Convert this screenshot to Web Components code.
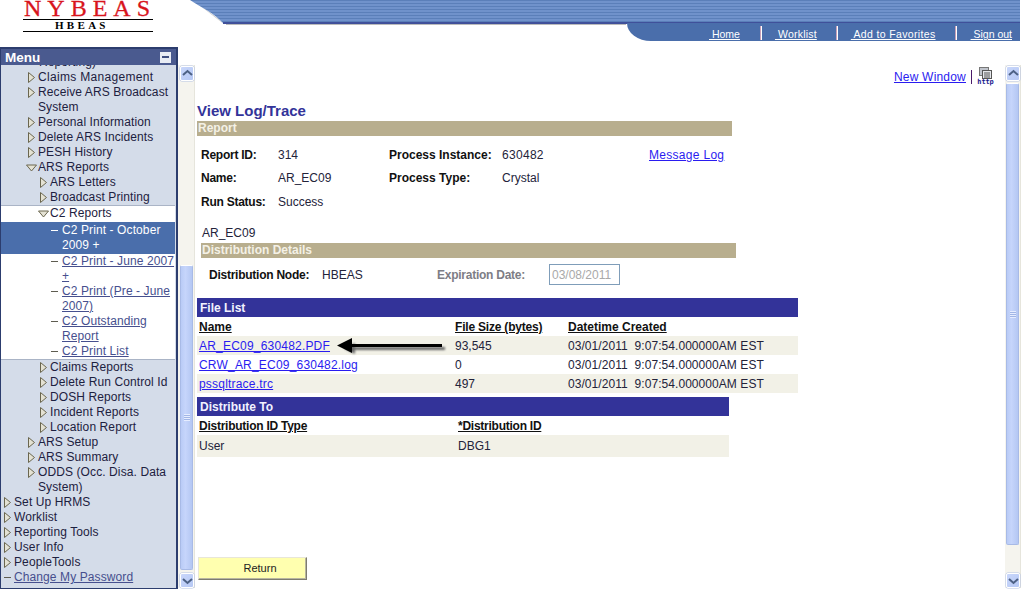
<!DOCTYPE html>
<html>
<head>
<meta charset="utf-8">
<title>View Log/Trace</title>
<style>
  html, body { margin: 0; height: 589px; overflow: hidden; background: #fff; }
  body { font: 12px "Liberation Sans", Arial, sans-serif; display: flex; flex-direction: column; }
  .work { display: flex; flex: 1; min-height: 0; }
</style>
</head>
<body>
<app-header></app-header>
<div class="work">
  <side-menu>
    <menu-item level="2" hang>Reporting)</menu-item>
    <menu-item level="2" icon="closed" style="letter-spacing:.32px">Claims Management</menu-item>
    <menu-item level="2" icon="closed">Receive ARS Broadcast<br>System</menu-item>
    <menu-item level="2" icon="closed">Personal Information</menu-item>
    <menu-item level="2" icon="closed">Delete ARS Incidents</menu-item>
    <menu-item level="2" icon="closed">PESH History</menu-item>
    <menu-item level="2" icon="open">ARS Reports</menu-item>
    <menu-item level="3" icon="closed">ARS Letters</menu-item>
    <menu-item level="3" icon="closed">Broadcast Printing</menu-item>
    <menu-group>
      <menu-item level="3" icon="open">C2 Reports</menu-item>
      <menu-item level="4" icon="dash" selected>C2 Print - October<br>2009 +</menu-item>
      <menu-item level="4" icon="dash" link>C2 Print - June 2007<br>+</menu-item>
      <menu-item level="4" icon="dash" link>C2 Print (Pre - June<br>2007)</menu-item>
      <menu-item level="4" icon="dash" link>C2 Outstanding<br>Report</menu-item>
      <menu-item level="4" icon="dash" link>C2 Print List</menu-item>
    </menu-group>
    <menu-item level="3" icon="closed">Claims Reports</menu-item>
    <menu-item level="3" icon="closed">Delete Run Control Id</menu-item>
    <menu-item level="3" icon="closed">DOSH Reports</menu-item>
    <menu-item level="3" icon="closed">Incident Reports</menu-item>
    <menu-item level="3" icon="closed">Location Report</menu-item>
    <menu-item level="2" icon="closed">ARS Setup</menu-item>
    <menu-item level="2" icon="closed">ARS Summary</menu-item>
    <menu-item level="2" icon="closed">ODDS (Occ. Disa. Data<br>System)</menu-item>
    <menu-item level="1" icon="closed">Set Up HRMS</menu-item>
    <menu-item level="1" icon="closed">Worklist</menu-item>
    <menu-item level="1" icon="closed">Reporting Tools</menu-item>
    <menu-item level="1" icon="closed">User Info</menu-item>
    <menu-item level="1" icon="closed">PeopleTools</menu-item>
    <menu-item level="1" icon="dash" link>Change My Password</menu-item>
  </side-menu>
  <scroll-bar before="184" thumb="305" grip="148" style="width:17px;padding-left:2px"></scroll-bar>
  <report-view></report-view>
  <scroll-bar before="2" thumb="462" grip="227"></scroll-bar>
</div>

<script>
class AppHeader extends HTMLElement {
  constructor() {
    super();
    this.attachShadow({ mode: "open" });
    this.shadowRoot.innerHTML = `
      <style>
        :host { display: flex; height: 41px; position: relative; flex: none; }
        .logo { width: 130px; margin-left: 23px; flex: none; color: #000; font-family: "Liberation Serif", serif; position: relative; z-index: 1; }
        .name { color: #d8141c; -webkit-text-stroke: .3px #d8141c; font-size: 24px; line-height: 17px; height: 19px; letter-spacing: 6px; padding-left: 1px; white-space: nowrap; border-bottom: 1px solid #000; }
        .sub { font-size: 11px; font-weight: bold; line-height: 11px; height: 11px; letter-spacing: 3.3px; padding-left: 32px; border-bottom: 1px solid #000; white-space: nowrap; }
        .swoosh { position: absolute; left: 0; top: 0; }
        nav { margin-left: auto; margin-top: 23px; margin-right: 1px; width: 393px; height: 18px; background: #4a6eab;
              border-bottom-left-radius: 24px 18px; display: flex; justify-content: flex-end; position: relative; box-sizing: border-box; padding-right: 8px; }
        a { color: #fff; font-size: 10.5px; line-height: 22px; height: 18px; text-decoration: underline; white-space: pre; }
        i { display: block; width: 1px; height: 14px; margin-top: 3px; background: #fff; border-left: 1px solid #c8a0b8; }
      </style>
      <div class="logo">
        <div class="name">NYBEAS</div>
        <div class="sub">HBEAS</div>
      </div>
      <svg class="swoosh" width="1021" height="30">
        <defs>
          <pattern id="st" width="2" height="3" patternUnits="userSpaceOnUse">
            <rect width="2" height="3" fill="#7092cb"/>
            <rect width="2" height="1" fill="#5b7fb9"/>
          </pattern>
        </defs>
        <path d="M194 1C204 9 214 14 225 25H627V25H1020V25H225Z" fill="#c8c8c8"/>
        <path d="M190 0C200 7 213 12 223 23H1020V0Z" fill="url(#st)"/>
        <rect x="223" y="22" width="797" height="2" fill="#40509a"/>
        <rect x="226" y="24" width="400" height="1" fill="#bbb"/>
      </svg>
      <nav>
        <a style="margin-right:20px"> Home</a><i></i>
        <a style="margin-left:13px;margin-right:19px;letter-spacing:.2px"> Worklist</a><i></i>
        <a style="margin-left:13px;margin-right:19px;letter-spacing:.35px"> Add to Favorites</a><i></i>
        <a style="margin-left:14px"> Sign out</a>
      </nav>
    `;
  }
}
customElements.define("app-header", AppHeader);

class SideMenu extends HTMLElement {
  constructor() {
    super();
    this.attachShadow({ mode: "open" });
    this.shadowRoot.innerHTML = `
      <style>
        :host { display: flex; flex-direction: column; width: 178px; flex: none; box-sizing: border-box; margin-top: 6px;
                border: 2px solid #2c3d6e; border-width: 2px 2px 1px 2px; border-left-width: 1px; background: #d4dce9; overflow: hidden; }
        .title { flex: none; height: 16px; background: #4a5a8f; color: #fff; font-weight: bold; font-size: 13.5px; line-height: 17px; padding-left: 4px;
                 display: flex; justify-content: space-between; align-items: center; }
        .title b { width: 11px; height: 11px; margin-right: 5px; background: #e8ecf4; display: flex; align-items: center; justify-content: center; }
        .title b::before { content: ""; width: 7px; height: 2px; background: #3f4f80; }
        .list { flex: 1; min-height: 0; overflow: hidden; }
        .inner { margin-top: -10px; }
      </style>
      <div class="title">Menu<b></b></div>
      <div class="list"><div class="inner"><slot></slot></div></div>
    `;
  }
}
customElements.define("side-menu", SideMenu);

class MenuGroup extends HTMLElement {
  constructor() {
    super();
    this.attachShadow({ mode: "open" });
    this.shadowRoot.innerHTML = `
      <style>
        :host { display: block; background: #fff; border-top: 1px solid #aab4c6; border-bottom: 1px solid #aab4c6; margin-right: 1px; }
      </style>
      <slot></slot>
    `;
  }
}
customElements.define("menu-group", MenuGroup);

class MenuItem extends HTMLElement {
  constructor() {
    super();
    this.attachShadow({ mode: "open" });
  }

  connectedCallback() {
    const level = Number(this.getAttribute("level") || 1);
    const icon = this.getAttribute("icon");
    const left = { 1: 3, 2: 27, 3: 39, 4: 50 }[level];
    const icons = {
      closed: `<svg width="8" height="11"><path d="M.5 .5L6.5 5.5L.5 10.5Z" fill="#e4e2d4" stroke="#6a664e"/></svg>`,
      open: `<svg width="12" height="8" style="margin-left:-2px;flex:none"><path d="M.5 1H10.5L5.5 7Z" fill="#e4e2d4" stroke="#6a664e"/></svg>`,
      dash: `<svg width="8" height="3"><rect y="1" width="7" height="1" fill="#5e5c50"/></svg>`,
    };
    const selected = this.hasAttribute("selected");
    const isLink = this.hasAttribute("link");
    this.shadowRoot.innerHTML = `
      <style>
        :host { display: block; ${selected ? "background:#4a6eab;color:#fff;padding:1px 0;margin-top:1px;" : "color:#1d2140;"}
                font-size: 12px; line-height: 15px; letter-spacing: .1px; white-space: nowrap; }
        .row { display: flex; padding-left: ${left}px; }
        .ic { width: ${level === 4 ? 11 : 10}px; flex: none; height: 15px; display: flex; align-items: center; }
        .ic svg { flex: none; }
        .tx { ${isLink ? "color:#464f8e;text-decoration:underline;" : ""} ${this.hasAttribute("hang") ? "margin-left:1px;" : ""} }
      </style>
      <div class="row">
        <span class="ic">${selected ? icons.dash.replace("#5e5c50", "#fff") : icons[icon] || ""}</span>
        <span class="tx"><slot></slot></span>
      </div>
    `;
  }
}
customElements.define("menu-item", MenuItem);

class ScrollBar extends HTMLElement {
  constructor() {
    super();
    this.attachShadow({ mode: "open" });
  }

  connectedCallback() {
    const before = this.getAttribute("before");
    const thumb = this.getAttribute("thumb");
    const grip = Number(this.getAttribute("grip"));
    const arrow = (d) => `<svg width="15" height="15"><path d="${d}" fill="none" stroke="#4d6185" stroke-width="2"/></svg>`;
    this.shadowRoot.innerHTML = `
      <style>
        :host { display: flex; flex-direction: column; flex: none; width: 16px; margin-top: 24px; margin-bottom: 1px; background: #f5f4ee; box-sizing: border-box; padding: 1px 1px 0; border-right: 1px solid #e6e5dc; }
        .btn { flex: none; width: 14px; height: 15px; background: linear-gradient(135deg, #c9d7fb, #b6c8f4); border: 1px solid #fff; box-sizing: border-box; box-shadow: 0 0 0 .5px #b6c4e4; border-radius: 2px; display: flex; align-items: center; justify-content: center; }
        .btn svg { flex: none; }
        .before { flex: none; height: ${before}px; }
        .thumb { flex: none; height: ${thumb}px; box-sizing: border-box; border: 1px solid #a8bae6; border-top-color: #fff; border-radius: 2px; position: relative;
                 background: linear-gradient(90deg, #b9cbf6, #c6d5fb 40%, #b4c7f3); }
        .thumb::after { content: ""; position: absolute; left: 3px; width: 6px; height: 7px; top: ${grip}px;
                        background: repeating-linear-gradient(180deg, #e6edff 0 1px, #a2b6e6 1px 2px); }
        .rest { flex: 1; }
      </style>
      <div class="btn">${arrow("M3 9L7.5 5L12 9")}</div>
      <div class="before"></div>
      <div class="thumb"></div>
      <div class="rest"></div>
      <div class="btn">${arrow("M3 6L7.5 10L12 6")}</div>
    `;
  }
}
customElements.define("scroll-bar", ScrollBar);

class SectionBar extends HTMLElement {
  constructor() {
    super();
    this.attachShadow({ mode: "open" });
  }

  connectedCallback() {
    const navy = this.getAttribute("tone") === "navy";
    this.shadowRoot.innerHTML = `
      <style>
        :host { display: block; box-sizing: border-box; font-weight: bold; font-size: 12px; color: ${navy ? "#f2f2ff" : "#f4f1e6"};
                background: ${navy ? "#333399" : "#b8ae8e"}; height: ${navy ? 19 : 15}px; line-height: ${navy ? 20 : 15}px; padding-left: ${navy ? 3 : 1}px; }
      </style>
      <slot></slot>
    `;
  }
}
customElements.define("section-bar", SectionBar);

class ReportView extends HTMLElement {
  constructor() {
    super();
    this.attachShadow({ mode: "open" });
    this.shadowRoot.innerHTML = `
      <style>
        :host { display: block; flex: 1; min-width: 0; margin-top: 24px; padding-left: 2px; position: relative; color: #23233a; font-size: 12px; overflow: hidden; }
        a { color: #2a1cf0; text-decoration: underline; letter-spacing: .2px; }
        b { color: #111; }
        .tight { letter-spacing: -.25px; }
        .tools { display: flex; justify-content: flex-end; align-items: center; height: 23px; padding-right: 11px; }
        .tools a { margin-top: 1px; }
        .tools i { display: block; width: 1px; height: 14px; background: #4a1a6a; margin: 0 5px 0 5px; }
        .http { width: 17px; height: 20px; font: bold 7px/7px "DejaVu Sans Mono", monospace; color: #1a1a90; text-align: center; letter-spacing: -.1px; }
        .http svg { display: block; margin-left: 2px; }
        h1 { margin: 14px 0 0; font-size: 15px; line-height: 18px; height: 19px; color: #333399; }
        .report { width: 535px; }
        .fields { display: grid; grid-template-columns: 77px 111px 113px 147px 1fr; grid-auto-rows: 23.5px; padding: 7px 0 0 4px; align-items: center; height: 70px; }
        .plain { padding-left: 5px; height: 18px; line-height: 16px; margin-top: 12px; box-sizing: border-box; }
        .dist { width: 535px; margin-left: 4px; }
        .node { display: flex; align-items: center; height: 40px; padding-left: 12px; box-sizing: border-box; padding-bottom: 6px; }
        .node span { flex: none; }
        .date { width: 71px; height: 21px; border: 1px solid #7f9db9; box-sizing: border-box; color: #a9a9a9; line-height: 20px; padding-left: 2px; flex: none; margin-top: -2px; }
        .files { width: 601px; }
        .dto { width: 532px; margin-top: 4px; }
        .grid { display: grid; grid-auto-rows: 19px; }
        .grid > * { padding-left: 2px; white-space: nowrap; line-height: 20px; height: 19px; }
        .files .grid { grid-template-columns: 256px 113px 1fr; }
        .dto .grid { grid-template-columns: 259px 1fr; grid-template-rows: 19px 22px; }
        .dto .grid > .alt { height: 22px; line-height: 22px; }
        .hd { color: #111; font-weight: bold; text-decoration: underline; }
        .alt { background: #f2f1e7; }
        .stamp { letter-spacing: .06px; }
        .arrow { position: absolute; left: 142px; top: 273px; }
      </style>
      <div class="tools">
        <a>New Window</a><i></i>
        <div class="http">
          <svg width="13" height="12">
            <rect x=".5" y=".5" width="9" height="8" fill="#c0c4cc" stroke="#777"/>
            <rect x="3.5" y="3.5" width="9" height="8" fill="#e4e6ea" stroke="#555"/>
            <path d="M5 6H11M5 8H11M5 10H11" stroke="#555"/>
          </svg>
          http
        </div>
      </div>
      <h1>View Log/Trace</h1>
      <div class="report"><section-bar>Report</section-bar></div>
      <div class="fields" style="width:800px">
        <b class="tight">Report ID:</b><span>314</span><b>Process Instance:</b><span style="letter-spacing:.3px">630482</span><a style="letter-spacing:.3px">Message Log</a>
        <b class="tight">Name:</b><span>AR_EC09</span><b>Process Type:</b><span>Crystal</span><span></span>
        <b class="tight">Run Status:</b><span>Success</span>
      </div>
      <div class="plain">AR_EC09</div>
      <div class="dist"><section-bar>Distribution Details</section-bar></div>
      <div class="node">
        <b class="tight" style="width:113px">Distribution Node:</b><span style="width:115px">HBEAS</span>
        <b class="tight" style="width:112px;color:#7d7d85">Expiration Date:</b><div class="date">03/08/2011</div>
      </div>
      <div class="files">
        <section-bar tone="navy">File List</section-bar>
        <div class="grid">
          <span class="hd">Name</span><span class="hd" style="letter-spacing:-.2px">File Size (bytes)</span><span class="hd">Datetime Created</span>
          <a class="alt">AR_EC09_630482.PDF</a><span class="alt">93,545</span><span class="alt stamp">03/01/2011&nbsp; 9:07:54.000000AM EST</span>
          <a>CRW_AR_EC09_630482.log</a><span>0</span><span class="stamp">03/01/2011&nbsp; 9:07:54.000000AM EST</span>
          <a class="alt">pssqltrace.trc</a><span class="alt">497</span><span class="alt stamp">03/01/2011&nbsp; 9:07:54.000000AM EST</span>
        </div>
      </div>
      <div class="dto">
        <section-bar tone="navy">Distribute To</section-bar>
        <div class="grid">
          <span class="hd tight">Distribution ID Type</span><span class="hd tight">*Distribution ID</span>
          <span class="alt">User</span><span class="alt">DBG1</span>
        </div>
      </div>
      <return-button>Return</return-button>
      <svg class="arrow" width="114" height="20">
        <defs><filter id="sh" x="-10%" y="-60%" width="125%" height="240%"><feGaussianBlur stdDeviation="1.3"/></filter></defs>
        <path d="M4 7.5L15 2V6H105V9H15V13Z" transform="translate(3 3)" fill="#666" filter="url(#sh)"/>
        <path d="M0 7.5L15 0V6H105V9H15V15Z" fill="#000"/>
      </svg>
    `;
  }
}
customElements.define("report-view", ReportView);

class ReturnButton extends HTMLElement {
  constructor() {
    super();
    this.attachShadow({ mode: "open" });
    this.shadowRoot.innerHTML = `
      <style>
        :host { display: block; box-sizing: border-box; width: 109px; height: 23px; margin: 100px 0 0 1px; padding-left: 15px; background: #ffffaf; color: #222; text-align: center; font-size: 11px; line-height: 20px;
                border: 1px solid; border-color: #e8e6d8 #7d7c70 #7d7c70 #e8e6d8; box-shadow: inset -1px -1px 0 #b8b6a0; }
      </style>
      <slot></slot>
    `;
  }
}
customElements.define("return-button", ReturnButton);
</script>
</body>
</html>
